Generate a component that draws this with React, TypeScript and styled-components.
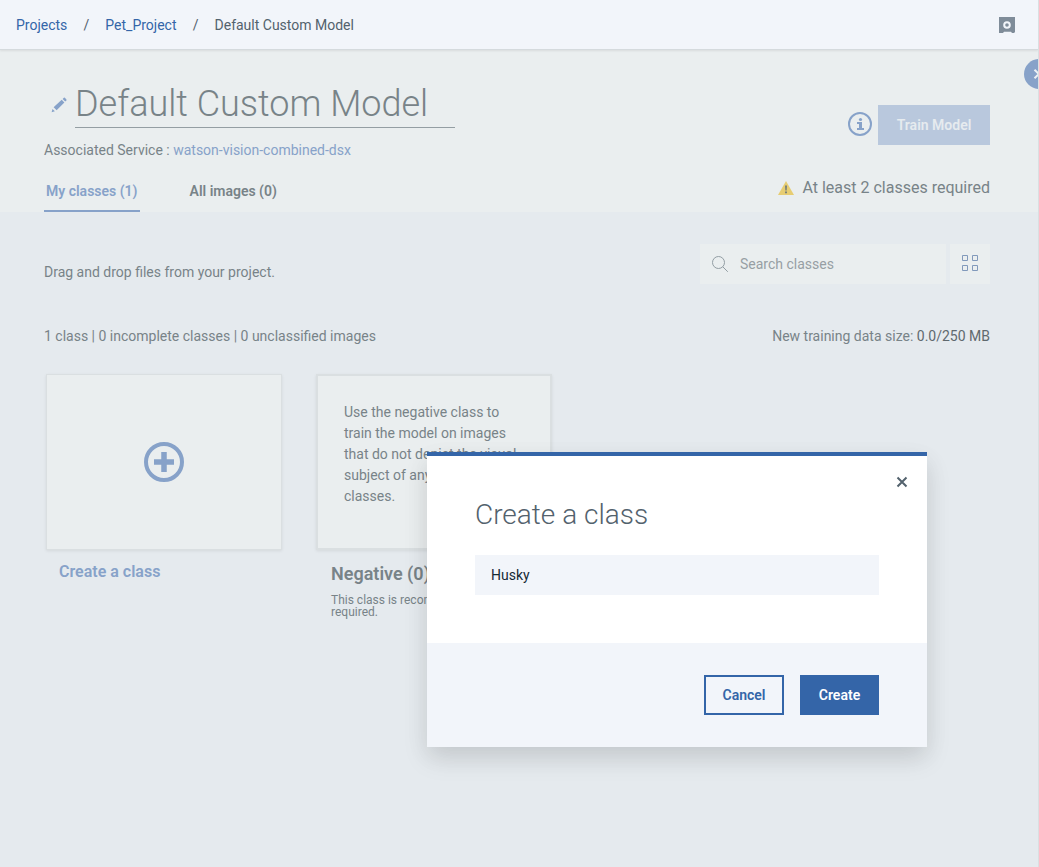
import React, { useState } from "react";
import styled, { createGlobalStyle, css } from "styled-components";

const color = {
  brand: "#3465a8",
  brandSoft: "#87a2c9",
  pale: "#f2f5fa",
  panel: "#eaeeef",
  canvas: "#e5eaee",
  edge: "#dadfe1",
  text: "#788388",
  strong: "#6b767c",
  ink: "#53626d",
};

const GlobalStyle = createGlobalStyle`
  *, *::before, *::after { box-sizing: border-box; }
  body {
    margin: 0;
    background: ${color.canvas};
    color: ${color.text};
    font: 400 14px/20px Roboto, "Liberation Sans", sans-serif;
  }
  button, input { font: inherit; color: inherit; border-radius: 0; }
  button { cursor: pointer; }
  h1, h2, h3, p, ol, ul { margin: 0; padding: 0; }
  a { text-decoration: none; }
`;

const Page = styled.div`
  position: relative;
  min-height: 100vh;
  overflow: hidden;
  border-right: 1px solid ${color.edge};
`;

const TopBar = styled.header`
  position: relative;
  display: flex;
  align-items: center;
  justify-content: space-between;
  height: 50px;
  padding: 0 23px 0 16px;
  background: ${color.pale};
  border-bottom: 1px solid #d5dadd;
  box-shadow: 0 1px 2px rgba(0, 0, 0, 0.08);
`;

const Crumbs = styled.ol`
  display: flex;
  list-style: none;
  color: ${color.ink};
  font-size: 14px;

  li + li::before {
    content: "/";
    display: inline-block;
    width: 38px;
    text-align: center;
  }
  a { color: ${color.brand}; }
`;

const Hero = styled.section`
  display: flex;
  justify-content: space-between;
  height: 162px;
  padding: 33px 48px 0 44px;
  background: ${color.panel};
`;

const HeroMain = styled.div`
  display: flex;
  flex-direction: column;
`;

const TitleRow = styled.div`
  display: flex;
  align-items: center;
  gap: 8px;
  padding-left: 7px;
`;

const TitleInput = styled.input`
  width: 380px;
  height: 45px;
  padding: 0 0 2px;
  border: 0;
  border-bottom: 1px solid #949ea3;
  background: none;
  outline: none;
  font-size: 36px;
  font-weight: 300;
`;

const Service = styled.p`
  margin-top: 12px;
  font-size: 14px;
  a { color: ${color.brandSoft}; }
`;

const Tabs = styled.div`
  display: flex;
  gap: 48px;
  margin-top: auto;
`;

const Tab = styled.button<{ $active?: boolean }>`
  height: 42px;
  padding: 2px 2px 0;
  border: 0;
  border-bottom: 2px solid ${(p) => (p.$active ? color.brandSoft : "transparent")};
  background: none;
  color: ${(p) => (p.$active ? color.brandSoft : color.text)};
  font-size: 14px;
  font-weight: 600;
`;

const HeroSide = styled.div`
  display: flex;
  flex-direction: column;
  align-items: flex-end;
  gap: 33px;
  padding-top: 22px;
`;

const TrainRow = styled.div`
  display: flex;
  align-items: center;
  gap: 6px;
`;

const IconButton = styled.button`
  display: flex;
  padding: 0;
  border: 0;
  background: none;
`;

const InfoButton = styled(IconButton)`
  padding-bottom: 2px;
`;

const TrainButton = styled.button`
  width: 112px;
  height: 40px;
  border: 0;
  background: #b9c8dd;
  color: #e6ebef;
  font-size: 14px;
  font-weight: 600;
`;

const Warning = styled.p`
  display: flex;
  align-items: center;
  gap: 8px;
  font-size: 16px;
`;

const PanelToggle = styled.button`
  position: absolute;
  top: 59px;
  right: -16px;
  display: flex;
  align-items: center;
  width: 30px;
  height: 30px;
  padding: 0 0 0 8px;
  border: 0;
  border-radius: 50%;
  background: ${color.brandSoft};
`;

const Body = styled.main`
  padding: 32px 48px 32px 44px;
`;

const Line = styled.div`
  display: flex;
  justify-content: space-between;
  align-items: center;
`;

const Hint = styled.p`
  padding-top: 16px;
`;

const Tools = styled.div`
  display: flex;
  gap: 4px;
`;

const SearchBox = styled.label`
  display: flex;
  align-items: center;
  gap: 12px;
  width: 246px;
  height: 40px;
  padding: 0 12px;
  background: ${color.panel};

  input {
    flex: 1;
    min-width: 0;
    padding: 0;
    border: 0;
    outline: none;
    background: none;
    font-size: 14px;
  }
  input::placeholder { color: #979fa4; opacity: 1; }
`;

const ViewButton = styled.button`
  display: flex;
  align-items: center;
  justify-content: center;
  width: 40px;
  height: 40px;
  padding: 0 0 2px;
  border: 0;
  background: ${color.panel};
`;

const Summary = styled(Line)`
  margin-top: 42px;
  strong { color: #5f696e; font-weight: 400; }
`;

const Cards = styled.div`
  display: flex;
  flex-wrap: wrap;
  gap: 34px;
  margin-top: 28px;
  padding-left: 2px;
`;

const Card = styled.article`
  width: 236px;
`;

const tile = css`
  width: 100%;
  height: 176px;
  background: ${color.panel};
  box-shadow: 0 1px 3px rgba(0, 0, 0, 0.08);
`;

const AddTile = styled.button`
  ${tile}
  display: flex;
  align-items: center;
  justify-content: center;
  border: 1px solid ${color.edge};
`;

const NoteTile = styled.div`
  ${tile}
  padding: 26px;
  border: 2px solid ${color.edge};
  line-height: 21px;
`;

const CardLink = styled.button`
  margin: 12px 0 0 13px;
  padding: 0;
  border: 0;
  background: none;
  color: ${color.brandSoft};
  font-size: 16px;
  font-weight: 600;
`;

const CardTitle = styled.h3`
  margin: 14px 0 0 15px;
  font-size: 18px;
  font-weight: 600;
  line-height: 20px;
`;

const CardNote = styled.p`
  margin: 10px 0 0 15px;
  font-size: 12px;
  line-height: 12px;
`;

const Overlay = styled.div`
  position: absolute;
  inset: 50px 0 0;
  display: flex;
  align-items: flex-end;
  justify-content: flex-end;
  padding: 0 111px 120px;
  pointer-events: none;
`;

const Dialog = styled.form`
  position: relative;
  width: 500px;
  border-top: 4px solid ${color.brand};
  background: #fff;
  box-shadow: 0 12px 24px rgba(0, 0, 0, 0.1), 0 8px 24px rgba(0, 0, 0, 0.05);
  pointer-events: auto;
`;

const DialogBody = styled.div`
  padding: 41px 48px 48px;
`;

const DialogTitle = styled.h2`
  color: ${color.ink};
  font-size: 28px;
  font-weight: 300;
  line-height: 36px;
`;

const DialogInput = styled.input`
  display: block;
  width: 100%;
  height: 40px;
  margin-top: 22px;
  padding: 0 16px;
  border: 0;
  outline: none;
  background: ${color.pale};
  color: #152935;
  font-size: 14px;
`;

const CloseButton = styled(IconButton)`
  position: absolute;
  top: 20px;
  right: 19px;
`;

const DialogFooter = styled.footer`
  display: flex;
  justify-content: flex-end;
  gap: 16px;
  padding: 32px 48px;
  background: ${color.pale};
`;

const DialogButton = styled.button<{ $primary?: boolean }>`
  height: 40px;
  padding: 0 16px;
  min-width: ${(p) => (p.$primary ? 79 : 80)}px;
  border: 2px solid ${color.brand};
  background: ${(p) => (p.$primary ? color.brand : "transparent")};
  color: ${(p) => (p.$primary ? "#fff" : color.brand)};
  font-size: 14px;
  font-weight: 600;
`;

const SafeIcon = () => (
  <svg width="16" height="16" viewBox="0 0 16 16" aria-hidden="true">
    <path fill="#7f8c99" d="M0 0h16v15l-1 1h-2l-1-1.3H5L4 16H0z" />
    <circle cx="8" cy="8" r="2.8" fill="none" stroke={color.pale} strokeWidth="2" />
  </svg>
);

const PencilIcon = () => (
  <svg width="16" height="18" viewBox="0 0 16 18" fill={color.brandSoft} aria-hidden="true">
    <path d="M11.600 2 12.900.8q.5-.5 1 0l1.500 1.600q.5.5 0 1L14.200 4.600z" />
    <path d="M10.700 2.800 13.400 5.500 5.600 13.200 2.600 10.300z" />
    <path d="M1.500 12 3.900 14.300 .6 15.200z" />
  </svg>
);

const InfoIcon = () => (
  <svg width="24" height="24" viewBox="0 0 24 24" fill={color.brandSoft} aria-hidden="true">
    <circle cx="12" cy="12" r="11" fill="none" stroke={color.brandSoft} strokeWidth="2" />
    <circle cx="12.500" cy="7.500" r="1.600" />
    <path d="M9 10h5v6h2v2H9v-2h2v-4H9z" />
  </svg>
);

const WarningIcon = () => (
  <svg width="16" height="14" viewBox="0 0 16 14" aria-hidden="true">
    <path fill="#e7cd72" d="M8 0l8 14H0z" />
    <path fill="#78807a" d="M7 4.500h2l-.3 5H7.300zM7 10.500h2v1.700H7z" />
  </svg>
);

const SearchIcon = () => (
  <svg width="16" height="16" viewBox="0 0 16 16" fill="none" stroke="#929da3" aria-hidden="true">
    <circle cx="6.500" cy="6.500" r="6" />
    <path d="M10.800 10.800l5 5" />
  </svg>
);

const GridIcon = () => (
  <svg width="16" height="16" viewBox="0 0 16 16" fill="none" stroke="#8199bb" aria-hidden="true">
    <path d="M.5.5h5v5h-5zM10.500.5h5v5h-5zM.5 10.500h5v5h-5zM10.500 10.500h5v5h-5z" />
  </svg>
);

const PlusIcon = () => (
  <svg width="40" height="40" viewBox="0 0 40 40" fill="none" stroke={color.brandSoft} aria-hidden="true">
    <circle cx="20" cy="20" r="18" strokeWidth="4" />
    <path d="M20 10v20M10 20h20" strokeWidth="5.500" />
  </svg>
);

const ChevronIcon = () => (
  <svg width="8" height="10" viewBox="0 0 8 10" fill="none" stroke="#edf1f4" strokeWidth="2" aria-hidden="true">
    <path d="M2.500.7 7 5 2.500 9.300" />
  </svg>
);

const CloseIcon = () => (
  <svg width="12" height="12" viewBox="0 0 12 12" fill="none" stroke="#53626d" strokeWidth="2" aria-hidden="true">
    <path d="M1.500 1.500l9 9M10.500 1.500l-9 9" />
  </svg>
);

export default function App() {
  const [title, setTitle] = useState("Default Custom Model");
  const [name, setName] = useState("Husky");
  const [open, setOpen] = useState(true);
  const close = () => setOpen(false);

  return (
    <>
      <GlobalStyle />
      <Page>
        <TopBar>
          <nav aria-label="Breadcrumb">
            <Crumbs>
              <li><a href="#projects">Projects</a></li>
              <li><a href="#pet-project">Pet_Project</a></li>
              <li>Default Custom Model</li>
            </Crumbs>
          </nav>
          <IconButton type="button" aria-label="Data assets"><SafeIcon /></IconButton>
        </TopBar>
        <Hero>
          <HeroMain>
            <TitleRow>
              <PencilIcon />
              <TitleInput aria-label="Model name" value={title} onChange={(e) => setTitle(e.target.value)} />
            </TitleRow>
            <Service>
              Associated Service : <a href="#service">watson-vision-combined-dsx</a>
            </Service>
            <Tabs role="tablist">
              <Tab type="button" role="tab" aria-selected $active>My classes (1)</Tab>
              <Tab type="button" role="tab" aria-selected={false}>All images (0)</Tab>
            </Tabs>
          </HeroMain>
          <HeroSide>
            <TrainRow>
              <InfoButton type="button" aria-label="Information"><InfoIcon /></InfoButton>
              <TrainButton type="button">Train Model</TrainButton>
            </TrainRow>
            <Warning><WarningIcon />At least 2 classes required</Warning>
          </HeroSide>
        </Hero>
        <PanelToggle type="button" aria-label="Toggle side panel"><ChevronIcon /></PanelToggle>
        <Body>
          <Line>
            <Hint>Drag and drop files from your project.</Hint>
            <Tools>
              <SearchBox>
                <SearchIcon />
                <input type="text" aria-label="Search classes" placeholder="Search classes" />
              </SearchBox>
              <ViewButton type="button" aria-label="Grid view"><GridIcon /></ViewButton>
            </Tools>
          </Line>
          <Summary>
            <p>1 class | 0 incomplete classes | 0 unclassified images</p>
            <p>New training data size: <strong>0.0/250 MB</strong></p>
          </Summary>
          <Cards>
            <Card>
              <AddTile type="button" aria-label="Add class" onClick={() => setOpen(true)}><PlusIcon /></AddTile>
              <CardLink type="button" onClick={() => setOpen(true)}>Create a class</CardLink>
            </Card>
            <Card>
              <NoteTile>
                Use the negative class to train the model on images that do not depict the visual subject of any of the classes.
              </NoteTile>
              <CardTitle>Negative (0)</CardTitle>
              <CardNote>This class is recommended but not required.</CardNote>
            </Card>
          </Cards>
        </Body>
        {open && (
          <Overlay>
            <Dialog role="dialog" aria-labelledby="dialog-title" onSubmit={(e) => { e.preventDefault(); close(); }}>
              <CloseButton type="button" aria-label="Close" onClick={close}><CloseIcon /></CloseButton>
              <DialogBody>
                <DialogTitle id="dialog-title">Create a class</DialogTitle>
                <DialogInput aria-label="Class name" value={name} onChange={(e) => setName(e.target.value)} />
              </DialogBody>
              <DialogFooter>
                <DialogButton type="button" onClick={close}>Cancel</DialogButton>
                <DialogButton type="submit" $primary>Create</DialogButton>
              </DialogFooter>
            </Dialog>
          </Overlay>
        )}
      </Page>
    </>
  );
}
